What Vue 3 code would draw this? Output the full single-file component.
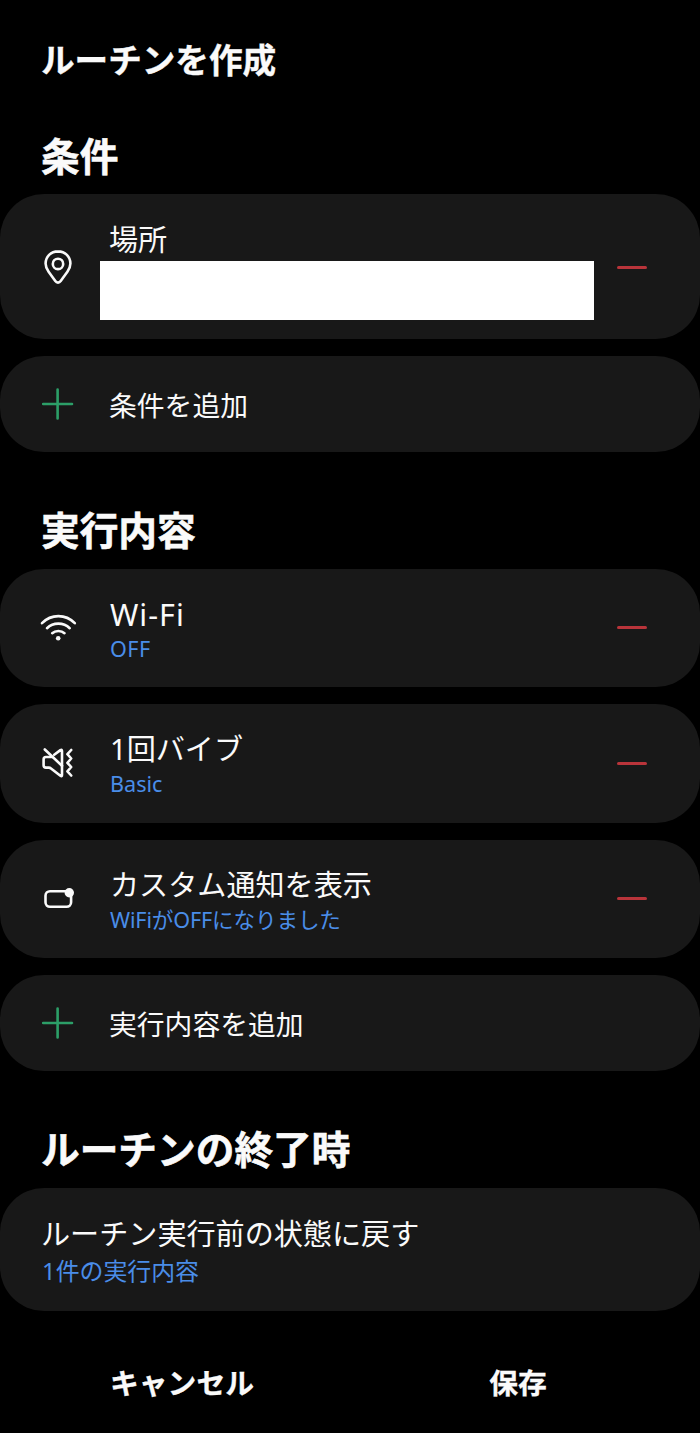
<template>
  <main class="routine" lang="ja">
    <h1 class="page-title">ルーチンを作成</h1>

    <section v-for="section in sections" :key="section.title" class="section">
      <h2 class="section-title">{{ section.title }}</h2>

      <div class="cards">
        <div
          v-for="item in section.items"
          :key="item.title"
          class="card"
          :class="[item.icon, { place: item.masked }]"
        >
          <svg class="icon" viewBox="0 0 40 40">
            <template v-if="item.icon === 'pin'">
              <path d="M20 4.4C12.9 4.4 7.6 9.8 7.6 16.6c0 3.2 1.3 5.8 3 8.2l6.7 9.3c1.4 2 4 2 5.4 0l6.7-9.3c1.7-2.4 3-5 3-8.2C32.4 9.8 27.1 4.4 20 4.4z" />
              <circle cx="20" cy="16.9" r="5.2" />
            </template>
            <template v-else-if="item.icon === 'wifi'">
              <path d="M4 15.2C13.2 5.8 27.6 5.8 36.8 15.2" />
              <path d="M9 20.2C15.2 14.1 25.5 14.1 31.7 20.2" />
              <path d="M14.2 25.2C17.4 22.2 23.3 22.2 26.5 25.2" />
              <circle class="solid" cx="20.2" cy="30.2" r="2.3" />
            </template>
            <template v-else-if="item.icon === 'vibrate'">
              <path d="M6.8 6.5L24 22.8" />
              <path d="M16.2 11.8L22.4 7.1Q24 6 24 8V32Q24 34 22.4 32.8L13 25.4Q12 24.6 10.8 24.6H8Q5.6 24.6 5.6 22.2V16.4Q5.6 14 8 14H14.4" />
              <path d="M33.2 7L29.4 11.2L33.2 15.5L29.4 19.8L33.2 24L29.4 28.3L33.2 32.5" />
            </template>
            <template v-else>
              <rect x="7.5" y="12.2" width="25.6" height="15.6" rx="4.5" />
              <circle class="solid" cx="31.3" cy="13.7" r="4.7" />
            </template>
          </svg>

          <div class="body">
            <div class="title">{{ item.title }}</div>
            <div v-if="item.masked" class="mask"></div>
            <div v-else class="detail">{{ item.detail }}</div>
          </div>

          <button class="remove" aria-label="削除"></button>
        </div>

        <div class="card add">
          <svg class="icon" viewBox="0 0 40 40">
            <path d="M5.2 20H34M19.6 5.6V34.4" />
          </svg>
          <span>{{ section.add }}</span>
        </div>
      </div>
    </section>

    <section class="section">
      <h2 class="section-title">ルーチンの終了時</h2>
      <div class="card ending">
        <div class="title">ルーチン実行前の状態に戻す</div>
        <div class="detail">1件の実行内容</div>
      </div>
    </section>

    <footer class="actions">
      <button>キャンセル</button>
      <button>保存</button>
    </footer>
  </main>
</template>

<script setup>
const sections = [
  {
    title: "条件",
    items: [{ icon: "pin", title: "場所", masked: true }],
    add: "条件を追加",
  },
  {
    title: "実行内容",
    items: [
      { icon: "wifi", title: "Wi-Fi", detail: "OFF" },
      { icon: "vibrate", title: "1回バイブ", detail: "Basic" },
      { icon: "notice", title: "カスタム通知を表示", detail: "WiFiがOFFになりました" },
    ],
    add: "実行内容を追加",
  },
];
</script>

<style>
body {
  margin: 0;
  background: #000000;
}
</style>

<style scoped>
.routine {
  box-sizing: border-box;
  height: 1433px;
  padding-top: 36px;
  overflow: hidden;
  background: #000000;
  color: #fafafa;
  font-family: "Noto Sans", "Noto Sans CJK JP", sans-serif;
}

.page-title {
  margin: 0 0 44px 41px;
  font-size: 33.6px;
  line-height: 48px;
  font-weight: 700;
  -webkit-text-stroke: 0.4px;
}

.section + .section {
  margin-top: 49.5px;
}

.section-title {
  margin: 0 0 11px 41px;
  font-size: 38.7px;
  line-height: 56px;
  font-weight: 700;
  -webkit-text-stroke: 0.6px;
}

.section:first-of-type .section-title {
  margin-bottom: 10px;
}

.cards {
  display: flex;
  flex-direction: column;
  gap: 17px;
}

.card {
  box-sizing: border-box;
  display: flex;
  align-items: center;
  height: 118.5px;
  padding: 0 53px 0 38px;
  border-radius: 44px;
  background: #181818;
}

.card.place {
  height: 145px;
}

.icon {
  flex: none;
  width: 40px;
  height: 40px;
  fill: none;
  stroke: #fafafa;
  stroke-width: 2.6;
  stroke-linecap: round;
  stroke-linejoin: round;
}

.icon .solid {
  fill: #fafafa;
  stroke: none;
}

.body {
  flex: 1;
  align-self: flex-start;
  padding: 25px 0 0 32px;
}

.place .body {
  padding: 26px 0 0 31px;
}

.title {
  font-size: 29.1px;
  line-height: 40px;
}

.wifi .title {
  font-size: 30.5px;
  letter-spacing: 1px;
}

.detail {
  color: #4a8de8;
  font-size: 21.6px;
  line-height: 30px;
}

.wifi .detail {
  letter-spacing: 0.5px;
}

.notice .detail {
  letter-spacing: -0.15px;
}

/* Adressen er dækket af en hvid flade */
.mask {
  width: 494px;
  height: 59px;
  margin: 1px 0 0 -9px;
  background: #ffffff;
}

.remove {
  flex: none;
  width: 30px;
  height: 3px;
  padding: 0;
  border: 0;
  border-radius: 2px;
  background: #b9343a;
}

.place .remove {
  margin-top: 2px;
}

.card.add {
  height: 96px;
  font-size: 27.8px;
}

.add .icon {
  margin-right: 31px;
  stroke: #2c9f68;
}

.add span {
  margin-top: -1px;
}

.card.ending {
  flex-direction: column;
  align-items: flex-start;
  height: 123px;
  padding: 26px 41px 0;
}

.ending .detail {
  padding-left: 1px;
  font-size: 23.9px;
  line-height: 34px;
}

.actions {
  display: flex;
  padding: 48px 14px 0;
}

.actions button {
  flex: 1;
  padding: 0;
  border: 0;
  background: none;
  color: inherit;
  font: 700 28.8px/48px "Noto Sans", "Noto Sans CJK JP", sans-serif;
  -webkit-text-stroke: 0.3px;
}
</style>
